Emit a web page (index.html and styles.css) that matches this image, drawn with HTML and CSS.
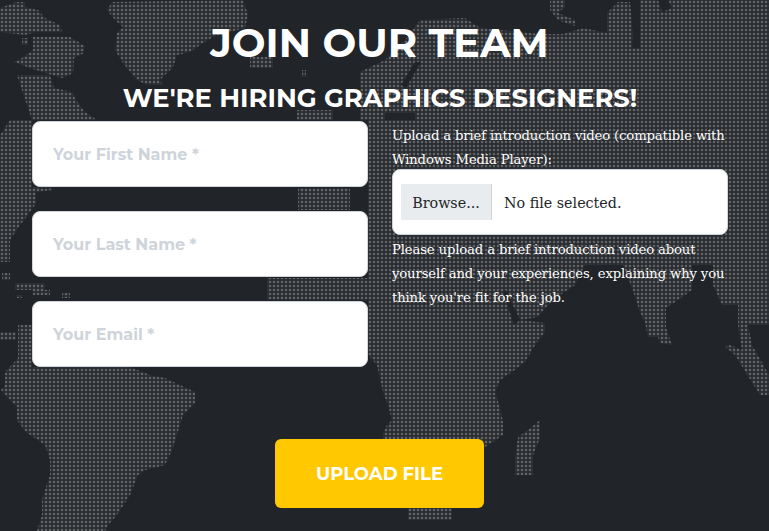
FILE: index.html
```html
<!DOCTYPE html>
<html lang="en">
<head>
<meta charset="utf-8">
<title>Join our team</title>
<link rel="stylesheet" href="styles.css">
</head>
<body>
<svg class="map" width="769" height="531" viewBox="0 0 769 531" aria-hidden="true">
  <defs>
    <pattern id="dots" width="4" height="4" patternUnits="userSpaceOnUse">
      <rect x="0.5" y="0.5" width="3" height="3" fill="#3f4145"/>
      <rect x="1" y="1" width="2" height="2" fill="#626365"/>
    </pattern>
  </defs>
  <g class="land">
    <path d="M0 8L16 2H25V7L38 10L45 18L60 25L62 32H35L25 35L0 32Z"/>
    <path d="M22 38H28V45H22ZM33 37H70L85 46L84 53L74 58L73 73L62 78L52 75L30 68L14 62L22 58L33 50Z"/>
    <path d="M17 75H50L54 88L72 92L76 100L85 112L97 120H32V187H52V190L36 192V203L28 215L20 225L10 240V262H0V135L10 120H32"/>
    <path d="M2 273H10V280H2ZM15 283H45V290H15ZM33 290H50V295H33ZM17 295H22V298H17ZM62 293H70V298H62Z"/>
    <path d="M0 332H16V340H0ZM18 325H32V358H18Z"/>
    <path d="M32 367H130L150 375L165 378L180 385L195 392V403L183 415L180 425L172 450L165 465L145 470L138 475L130 495L117 515L108 525L105 531H37L42 515V500L45 490L50 475V460L45 445L26 432L17 420V407L8 398L1 390L5 385V372L18 358H32Z"/>
    <path d="M107 10L112 2L243 0L248 15L245 28L230 32L213 37L203 43L190 52L177 55L173 67L160 80L163 85H147L137 80L123 63L115 50L117 33L123 27L115 20Z"/>
    <path d="M250 57H273V68H250ZM302 70H306V77H302ZM297 110H333V120H297ZM298 188H350V210H298ZM267 278H368V300H267Z"/>
    <path d="M360 120V72L385 60L405 40L420 20L465 18L480 28L540 34H563L583 28L607 33V13L618 2H630L633 35L632 48H640V0H769V305H738L722 305L713 285V265H692V290L678 300L632 288L623 265H585L575 285L560 295L548 305L538 317L520 320L545 323V332L535 345L525 362L512 372L500 380L495 392L500 408L503 422V435L485 447L470 470L452 510V520H408V510L383 439V433L387 425L392 420L388 405L383 392L377 365L368 355V120Z"/>
    <path d="M550 0H565V7L558 13L575 20V26L558 20L550 10Z"/>
    <path d="M540 420V438L533 455V475H515V458L518 437L528 430Z"/>
    <path d="M632 288L678 300L666 308V328L672 345L660 343L658 337H648L645 322L640 312Z"/>
    <path d="M738 305H769V325H748L752 345L769 375V395H760L735 355L725 347L730 345L742 350L738 325Z"/>
  </g>
  <g class="sea">
    <path d="M658 0H668L672 8L662 12Z"/>
    <path d="M385 113H415V120H385Z"/>
    <path d="M415 62L421 62L406 88L401 85Z"/>
    <path d="M503 292L506 290L520 320L514 325Z"/>
  </g>
</svg>
<main class="page">
  <h1 class="title">JOIN OUR TEAM</h1>
  <h2 class="subtitle">WE'RE HIRING GRAPHICS DESIGNERS!</h2>
  <form class="grid">
    <div class="col fields">
      <input class="field" type="text" placeholder="Your First Name *">
      <input class="field" type="text" placeholder="Your Last Name *">
      <input class="field" type="text" placeholder="Your Email *">
    </div>
    <div class="col">
      <p class="note note-before">Upload a brief introduction video (compatible with Windows Media Player):</p>
      <div class="file">
        <span class="browse">Browse...</span>
        <span class="file-name">No file selected.</span>
      </div>
      <p class="note note-after">Please upload a brief introduction video about yourself and your experiences, explaining why you think you're fit for the job.</p>
    </div>
  </form>
  <div class="actions"><button class="submit" type="button">UPLOAD FILE</button></div>
</main>
</body>
</html>
```
FILE: styles.css
```css
* { box-sizing: border-box; }
html, body { margin: 0; height: 100%; }
body {
  position: relative;
  width: 769px;
  height: 531px;
  overflow: hidden;
  background: #212429;
  font-family: "DejaVu Serif", serif;
  color: #fff;
}
.map { position: absolute; left: 0; top: 0; }
.land { fill: url(#dots); }
.sea { fill: #212429; }
.page { position: relative; padding: 0 42px 0 32px; }
.title {
  margin: 0;
  padding-top: 20px;
  height: 68px;
  text-align: center;
  font: 700 40px/46px Montserrat, Inter, "Liberation Sans", sans-serif;
}
.subtitle {
  margin: 0 -1px 0 0;
  height: 53px;
  padding-top: 15px;
  text-align: center;
  font: 700 25.8px/30px Montserrat, Inter, "Liberation Sans", sans-serif;
}
.grid { display: flex; gap: 24px; }
.col { flex: none; width: 336px; }
.fields { display: flex; flex-direction: column; gap: 24px; }
.field {
  display: block;
  width: 336px;
  height: 66px;
  padding: 0 20px;
  border: 1px solid #ced4da;
  border-radius: 8px;
  background: #fff;
  font: 700 16px Montserrat, Inter, "Liberation Sans", sans-serif;
}
.field::placeholder { color: #ced4da; opacity: 1; }
.note {
  margin: 0;
  font: 400 13.2px/24px "DejaVu Serif", serif;
  letter-spacing: -0.14px;
  color: #fff;
}
.note-before { padding-top: 3px; margin-bottom: -3px; }
.note-after { margin-top: 3px; }
.file {
  display: flex;
  align-items: center;
  height: 66px;
  padding-left: 8px;
  border: 1px solid #ced4da;
  border-radius: 8px;
  background: #fff;
  font: 400 14.3px "DejaVu Serif", serif;
  color: #212529;
}
.browse {
  display: flex;
  align-items: center;
  justify-content: center;
  width: 91px;
  height: 36px;
  padding-top: 2px;
  background: #e9ecef;
  border-right: 1px solid #ced4da;
}
.file-name { margin-left: 12px; padding-top: 2px; }
.actions { display: flex; justify-content: center; padding-top: 72px; }
.submit {
  width: 209px;
  height: 69px;
  border: 0;
  border-radius: 6px;
  background: #ffc800;
  color: #fff;
  font: 700 18px Montserrat, Inter, "Liberation Sans", sans-serif;
}
```
